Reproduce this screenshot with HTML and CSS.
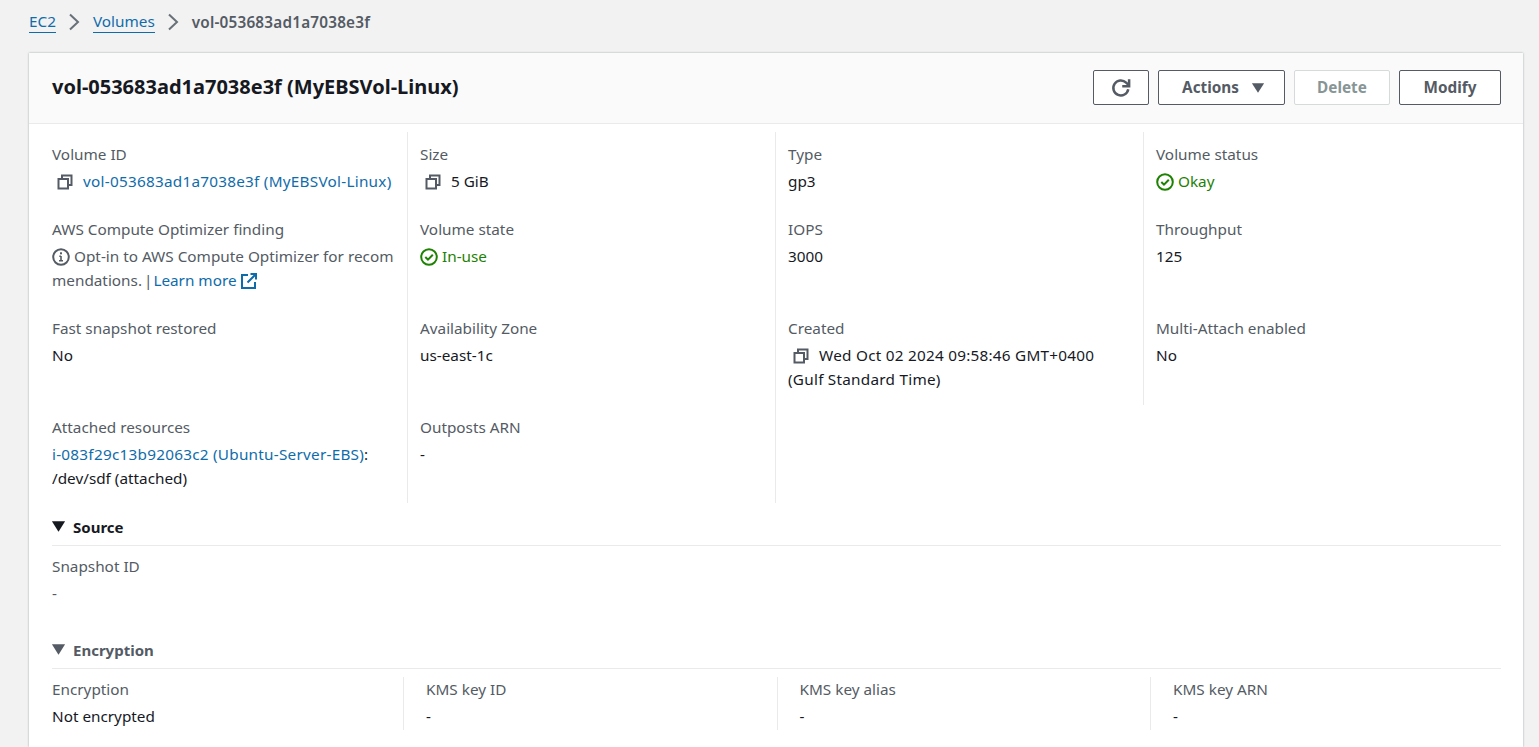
FILE: index.html
```html
<!DOCTYPE html>
<html lang="en">

<head>
    <meta charset="UTF-8">
    <title>Volumes | EC2</title>
    <link rel="stylesheet" href="styles.css">
</head>

<body>
    <svg class="sprite" xmlns="http://www.w3.org/2000/svg">
        <symbol id="i-copy" viewBox="0 0 16 16">
            <path d="M1.500 5h9.500v9.500H1.500z M5 5V1.500h9.500V11H11" fill="none" stroke="currentColor" stroke-width="2" />
        </symbol>
        <symbol id="i-ok" viewBox="0 0 18 18">
            <circle cx="9" cy="9" r="7.800" fill="none" stroke="currentColor" stroke-width="2" />
            <path d="M5.300 9l2.700 2.700 4.800-4.900" fill="none" stroke="currentColor" stroke-width="2" />
        </symbol>
        <symbol id="i-info" viewBox="0 0 18 18">
            <circle cx="9" cy="9" r="7.800" fill="none" stroke="currentColor" stroke-width="2" />
            <path d="M9 8v5M7 12.800h4M7.300 8.200H9" fill="none" stroke="currentColor" stroke-width="1.600" />
            <rect x="8" y="4.300" width="2" height="2" fill="currentColor" />
        </symbol>
        <symbol id="i-ext" viewBox="0 0 16 16">
            <path d="M7 2H1v13h13V9M9.500 1H15v5.500M15 1L6.500 9.500" fill="none" stroke="currentColor" stroke-width="2" />
        </symbol>
        <symbol id="i-caret" viewBox="0 0 16 16">
            <path d="M1 2.500h14L8 13.500z" fill="currentColor" />
        </symbol>
        <symbol id="i-chevron" viewBox="0 0 12 18">
            <path d="M2 1.500l8 7.500-8 7.500" fill="none" stroke="currentColor" stroke-width="2" />
        </symbol>
        <symbol id="i-refresh" viewBox="0 0 16 16">
            <path d="M13.800 9a6 6 0 1 1-1.700-5.300L14 5.500" fill="none" stroke="currentColor" stroke-width="2" />
            <path d="M14.500 1v5.500H9" fill="none" stroke="currentColor" stroke-width="2" />
        </symbol>
    </svg>

    <nav class="crumbs">
        <a href="#">EC2</a>
        <svg class="chevron"><use href="#i-chevron" /></svg>
        <a href="#">Volumes</a>
        <svg class="chevron"><use href="#i-chevron" /></svg>
        <span class="crumb-current">vol-053683ad1a7038e3f</span>
    </nav>

    <div class="card">
        <div class="card-head">
            <h1>vol-053683ad1a7038e3f (MyEBSVol-Linux)</h1>
            <div class="actions">
                <button class="btn btn-refresh"><svg class="icon"><use href="#i-refresh" /></svg></button>
                <button class="btn btn-actions">Actions <svg class="caret"><use href="#i-caret" /></svg></button>
                <button class="btn btn-delete" disabled>Delete</button>
                <button class="btn btn-modify">Modify</button>
            </div>
        </div>

        <div class="card-body">
            <div class="details">
                <div class="cell">
                    <div class="label">Volume ID</div>
                    <div class="value num"><svg class="icon copy"><use href="#i-copy" /></svg><a href="#">vol-053683ad1a7038e3f (MyEBSVol-Linux)</a></div>
                </div>
                <div class="cell">
                    <div class="label">Size</div>
                    <div class="value"><svg class="icon copy"><use href="#i-copy" /></svg>5 GiB</div>
                </div>
                <div class="cell">
                    <div class="label">Type</div>
                    <div class="value">gp3</div>
                </div>
                <div class="cell">
                    <div class="label">Volume status</div>
                    <div class="value ok"><svg class="icon status"><use href="#i-ok" /></svg>Okay</div>
                </div>

                <div class="cell">
                    <div class="label">AWS Compute Optimizer finding</div>
                    <div class="value muted">
                        <div><svg class="icon status"><use href="#i-info" /></svg>Opt-in to AWS Compute Optimizer for recom</div>
                        <div><span class="tight">mendations. |</span> <a href="#">Learn more</a> <svg class="icon ext"><use href="#i-ext" /></svg></div>
                    </div>
                </div>
                <div class="cell">
                    <div class="label">Volume state</div>
                    <div class="value ok"><svg class="icon status"><use href="#i-ok" /></svg>In-use</div>
                </div>
                <div class="cell">
                    <div class="label">IOPS</div>
                    <div class="value">3000</div>
                </div>
                <div class="cell">
                    <div class="label">Throughput</div>
                    <div class="value">125</div>
                </div>

                <div class="cell">
                    <div class="label">Fast snapshot restored</div>
                    <div class="value">No</div>
                </div>
                <div class="cell">
                    <div class="label">Availability Zone</div>
                    <div class="value">us-east-1c</div>
                </div>
                <div class="cell">
                    <div class="label">Created</div>
                    <div class="value num"><svg class="icon copy"><use href="#i-copy" /></svg>Wed Oct 02 2024 09:58:46 GMT+0400<br>(Gulf Standard Time)</div>
                </div>
                <div class="cell">
                    <div class="label">Multi-Attach enabled</div>
                    <div class="value">No</div>
                </div>

                <div class="cell">
                    <div class="label">Attached resources</div>
                    <div class="value"><a href="#" class="num">i-083f29c13b92063c2 (Ubuntu-Server-EBS)</a>:<br>/dev/sdf (attached)</div>
                </div>
                <div class="cell">
                    <div class="label">Outposts ARN</div>
                    <div class="value">-</div>
                </div>
                <div class="cell"></div>
            </div>

            <section class="section">
                <h2 class="section-title"><svg class="caret"><use href="#i-caret" /></svg>Source</h2>
                <div class="plain">
                    <div class="label">Snapshot ID</div>
                    <div class="value muted">-</div>
                </div>
            </section>

            <section class="section section-enc">
                <h2 class="section-title title-grey"><svg class="caret"><use href="#i-caret" /></svg>Encryption</h2>
                <div class="enc-grid">
                    <div class="cell">
                        <div class="label">Encryption</div>
                        <div class="value">Not encrypted</div>
                    </div>
                    <div class="cell">
                        <div class="label">KMS key ID</div>
                        <div class="value">-</div>
                    </div>
                    <div class="cell">
                        <div class="label">KMS key alias</div>
                        <div class="value">-</div>
                    </div>
                    <div class="cell">
                        <div class="label">KMS key ARN</div>
                        <div class="value">-</div>
                    </div>
                </div>
            </section>
        </div>
    </div>
</body>

</html>
```

FILE: styles.css
```css
html,
body {
    height: 100%;
    overflow: hidden;
}

body {
    display: flex;
    flex-direction: column;
    margin: 0;
    padding: 0 16px 0 29px;
    box-sizing: border-box;
    background: #f2f2f2;
    color: #16191f;
    font-family: "Noto Sans", "Liberation Sans", sans-serif;
    font-size: 15.3px;
    line-height: 24px;
}

a {
    color: #0f6cab;
    text-decoration: none;
}

.sprite {
    display: none;
}

.icon {
    width: 16px;
    height: 16px;
    vertical-align: -3px;
}

.status {
    width: 18px;
    height: 18px;
    margin-right: 4px;
    vertical-align: -4px;
}

.crumbs {
    display: flex;
    flex: none;
    align-items: center;
    height: 53px;
    padding-bottom: 10px;
    box-sizing: border-box;
}

.crumbs a {
    border-bottom: 1px solid #0f6cab;
    line-height: 22px;
}

.chevron {
    width: 12px;
    height: 18px;
    margin: 0 13px 0 12px;
    color: #687078;
}

.crumb-current {
    color: #545b64;
    font-weight: 600;
    letter-spacing: 0.2px;
}

.card {
    flex: 1;
    background: #fff;
    box-shadow: 0 0 2px rgba(0, 28, 36, 0.35);
}

.card-head {
    display: flex;
    justify-content: space-between;
    align-items: center;
    height: 71px;
    padding: 0 22px 2px 23px;
    background: #fafafa;
    border-bottom: 1px solid #eaeaea;
    box-sizing: border-box;
}

h1 {
    margin: 0;
    font-size: 20px;
    font-weight: 700;
}

.actions {
    display: flex;
    gap: 9px;
}

.btn {
    height: 35px;
    padding: 0;
    background: #fff;
    border: 1px solid #545b64;
    border-radius: 2px;
    color: #545b64;
    font-family: inherit;
    font-size: 15.3px;
    font-weight: 700;
}

.btn-refresh {
    width: 56px;
}

.btn-refresh .icon {
    width: 20px;
    height: 20px;
    vertical-align: -5px;
}

.btn-actions {
    width: 127px;
    padding-left: 4px;
}

.btn-actions .caret {
    margin-left: 8px;
    vertical-align: -2px;
}

.btn-delete {
    width: 96px;
    border-color: #d5dbdb;
    color: #879596;
}

.btn-modify {
    width: 102px;
}

.caret {
    width: 14px;
    height: 14px;
}

.card-body {
    padding: 8px 22px 0 23px;
}

.details {
    display: grid;
    grid-template-columns: 355px 368px 368px 1fr;
    grid-template-rows: 75px 99px 99px 98px;
}

.cell {
    padding: 10px 10px 0 12px;
    border-left: 1px solid #eaeaea;
}

.cell:nth-child(4n + 1) {
    padding-left: 0;
    border-left: 0;
}

.label {
    color: #545b64;
}

.value {
    margin-top: 3px;
}

.num {
    letter-spacing: 0.25px;
}

.muted {
    color: #545b64;
}

.tight {
    word-spacing: -2px;
    margin-right: -3px;
}

.copy {
    margin: 0 10px 0 5px;
    color: #545b64;
}

.ok {
    color: #1d8102;
}

.ext {
    color: #0f6cab;
}

.section {
    margin-top: 12px;
}

.section-title {
    display: flex;
    align-items: center;
    gap: 7px;
    margin: 0;
    height: 31px;
    padding-bottom: 7px;
    box-sizing: border-box;
    border-bottom: 1px solid #eaeaea;
    font-size: 15px;
    font-weight: 700;
}

.section-title .caret {
    width: 15px;
    height: 15px;
    margin-left: -1px;
}

.title-grey {
    color: #545b64;
}

.plain {
    padding-top: 8px;
}

.section-enc {
    margin-top: 33px;
}

.enc-grid {
    display: grid;
    grid-template-columns: 351px 373.500px 373.500px 1fr;
    margin-top: 8px;
}

.enc-grid .cell {
    padding-top: 0;
    padding-bottom: 2px;
    padding-left: 22px;
}

.enc-grid .cell:first-child {
    padding-left: 0;
}
```
